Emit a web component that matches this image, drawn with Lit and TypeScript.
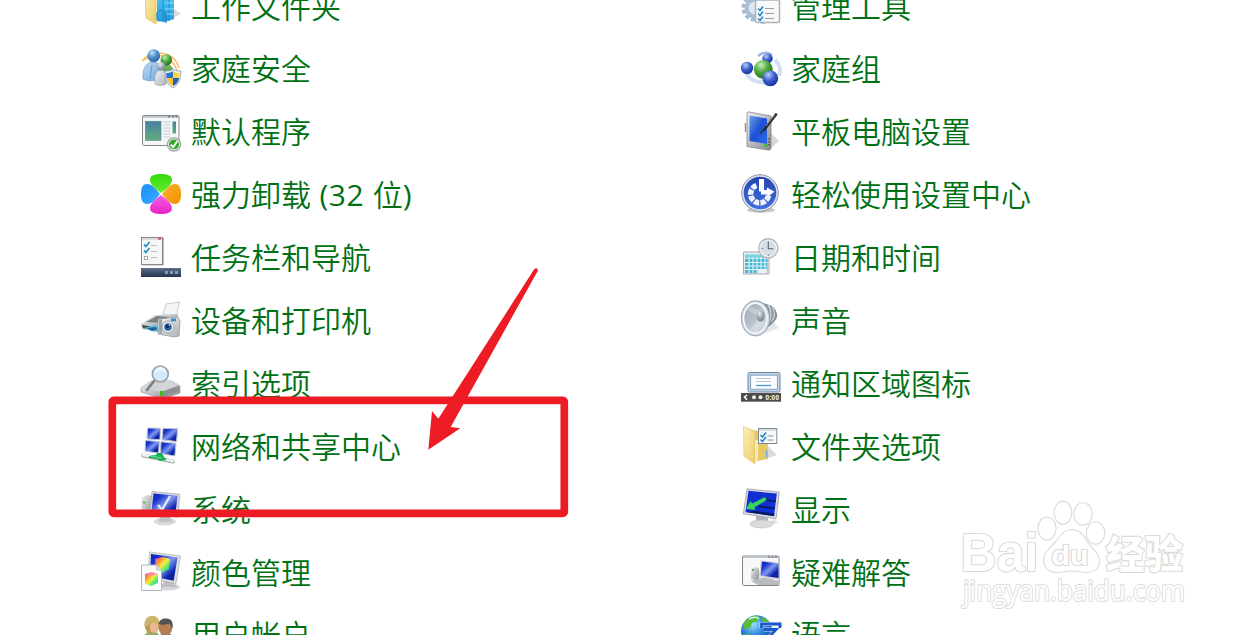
import { LitElement, html, svg, css } from "lit";
import { customElement } from "lit/decorators.js";

const workFolder = svg`
  <path d="M22 38 40 29 33 24z" fill="#000" opacity=".14"/>
  <path d="M4 4 15 8V39L5 33z" fill="url(#folder)" stroke="#d6b553" stroke-width=".6"/>
  <path d="M15 9h4v27l-4 3z" fill="#f8e9a8"/>
  <path d="M16 8h17v26l-9 3-8-1z" fill="url(#binder)"/>
  <path d="M22 8v29M28 8v28" stroke="#1287c8" stroke-width=".8"/>
  <path d="M24 18h9M24 24h9M24 29h9" stroke="#8fdcff" stroke-width="1.2"/>
  <path d="M16 35v-7l4-3 4 3v7M25 38V28" fill="none" stroke="#2e8dc0" stroke-width="1.3"/>`;

const familySafety = svg`
  <path d="M1 13C8 3 32 0 38 20M3 12C14 4 30 6 36 22" fill="none" stroke="#f9bd68" stroke-width="1.5"/>
  <path d="M17 29c-1-8 2-13 8-13s8 5 8 12z" fill="url(#green)"/>
  <circle cx="25.3" cy="12" r="5.8" fill="url(#greenBall)"/>
  <path d="M2 31C1 21 5 14 12 14s9 6 8 16c-3 3-13 4-18 1z" fill="url(#paleBlue)" stroke="#4b83ba" stroke-width=".5"/>
  <path d="M11 17 9 31" stroke="#5a91c4" stroke-width=".8"/>
  <circle cx="12.7" cy="7.7" r="6.4" fill="url(#skyBall)"/>
  <path d="M14 36c-1-9 1-14 6-14s7 5 5 14c-2 2-9 2-11 0z" fill="url(#silver)" stroke="#8b949c" stroke-width=".5"/>
  <circle cx="20.2" cy="18.3" r="4.3" fill="url(#greyBall)"/>
  <path d="M32 21c3 2 5 2 8 2-.4 9-2 13-8 17-6-4-8-8-8-17 3 0 5 0 8-2z" fill="#e9edf1" stroke="#8796a4" stroke-width=".8"/>
  <path d="M32 23v7h-6.5l-.3-5c3 0 5-.6 6.800-2z" fill="#2c73cf"/>
  <path d="M32 23c2 1.400 4 2 6.500 2l-.5 5h-6z" fill="#fad647"/>
  <path d="M25.700 30H32v8c-3-1.600-5.400-4-6.300-8z" fill="#f5c632"/>
  <path d="M32 30h6.100c-.8 4-3 6.500-6.100 8z" fill="#2463b8"/>`;

const defaultPrograms = svg`
  <rect x="1.500" y="4.500" width="36.500" height="30" rx="1" fill="#f5f7f8" stroke="#82898f"/>
  <path d="M2 6h35" stroke="#c4cad0" stroke-width="2"/>
  <path d="M27 5.800h2M31 5.800h2M34.500 5.800h2" stroke="#58626b"/>
  <rect x="4.500" y="10.300" width="15.500" height="19" fill="url(#teal)" stroke="#5e8791" stroke-width=".7"/>
  <path d="M22.500 11h7M22.500 14h7M22.500 17h7M22.500 20h7M22.500 23h7M22.500 26h7" stroke="#c5c9cc"/>
  <rect x="31.500" y="10.500" width="3.500" height="12" fill="url(#teal)"/>
  <circle cx="33" cy="33.500" r="6.500" fill="#fff" stroke="#a4aaa4" stroke-width="1.500"/>
  <circle cx="33" cy="33.500" r="5" fill="#35a52b"/>
  <path d="m29.700 33.600 2.500 2.600 4-6" fill="none" stroke="#fff" stroke-width="1.800"/>`;

const pinwheel = svg`
  <path d="M20 19C15 15 9 11 9 5.500 9 1.200 15 0 20 0s11 1.200 11 5.500C31 11 25 15 20 19z" fill="url(#petalGreen)"/>
  <path d="M20 21C15 25 9 29 9 34.500 9 38.800 15 40 20 40s11-1.200 11-5.500C31 29 25 25 20 21z" fill="url(#petalPink)"/>
  <path d="M19 20C15 15 11 10 6 10 1.200 10 0 15 0 20s1.200 10 6 10c5 0 9-5 13-10z" fill="url(#petalBlue)"/>
  <path d="M21 20C25 15 29 10 34 10c4.800 0 6 5 6 10s-1.200 10-6 10c-5 0-9-5-13-10z" fill="url(#petalOrange)"/>`;

const taskbar = svg`
  <path d="M1.500 1h21.500v27.500H1.500z" fill="#bbb"/>
  <rect x=".5" y=".5" width="21" height="27" fill="#f6f6f6" stroke="#888"/>
  <path d="M1 2h20" stroke="#d5d5d5" stroke-width="1.500"/>
  <path d="M17 1.700h3" stroke="#d25a5a" stroke-width="2"/>
  <path d="m3 7.500 2 2L8.500 5M3 13.500l2 2L8.500 11" fill="none" stroke="#2b8fc8" stroke-width="1.800"/>
  <rect x="3.500" y="19.500" width="3" height="3" fill="#fff" stroke="#aaa"/>
  <path d="M10 8.500h6M10 14.500h6M10 20.500h6" stroke="#c2c2c2"/>
  <rect y="31" width="40" height="9" fill="url(#slate)"/>
  <path d="M24 34h3v3h-3zM29 34h3v3h-3zM34 34h3v3h-3z" fill="#8c9bb0"/>`;

const devices = svg`
  <path d="m22 14 3-10 14-2c-2 5-3 9-3 16z" fill="#f4f5f6" stroke="#b4b8bc" stroke-width=".7"/>
  <path d="m0 24 14-9 22-1 2 5-19 13-18-3z" fill="url(#metal)"/>
  <path d="m5 22 11-6 11 1-8 6z" fill="#797f85"/>
  <path d="m1 25 17 3v3L2 28z" fill="#42484c"/>
  <path d="m3 28 12-3 5 2-6 5z" fill="#53c2dc"/>
  <path d="m6 28 9-1 1 2-5 2z" fill="#1c5d9f"/>
  <path d="m17 19 20-2 2 4-1 15-5 1-16-3z" fill="url(#silver)" stroke="#8c9298" stroke-width=".7"/>
  <path d="m18 19 3 .6v14.500l-3-.8z" fill="#9da3a9"/>
  <path d="M30 18.500h5v2.800h-5z" fill="#3a8ad0"/>
  <circle cx="27" cy="27" r="6" fill="#e9edf0" stroke="#8a9299" stroke-width=".8"/>
  <circle cx="27" cy="27" r="3.800" fill="#2d62a4"/>
  <circle cx="26.500" cy="26.500" r="1.700" fill="#112957"/>
  <circle cx="28.500" cy="25" r=".8" fill="#c9e6ff"/>`;

const indexing = svg`
  <path d="m0 26 11-7h20l8 5v7l-17 6L0 30z" fill="url(#metal)" stroke="#83878b" stroke-width=".5"/>
  <path d="m0 25 11-7h18l9 5-18 7z" fill="#d2d4d6"/>
  <path d="M20 30 38 24v5l-18 7z" fill="#8c9094"/>
  <path d="M19 29h3v4l-3 1z" fill="#3eb71d"/>
  <path d="m13 19-7 9" stroke="#76797d" stroke-width="2.400" stroke-linecap="round"/>
  <circle cx="19.300" cy="12" r="8" fill="#d2e8fa" fill-opacity=".95" stroke="#9ba1a8" stroke-width="1.600"/>
  <path d="M13 13c3-6 9-5 12-2-1-8-11-8-12 2z" fill="#fff" opacity=".7"/>`;

const network = svg`
  <path d="m6.500 3 13 .3-.6 11.400L6 14z" fill="url(#screen)" stroke="#c2c7d0"/>
  <path d="m22 3.300 14.700.2L35.500 16.500 21 14.800z" fill="url(#screen)" stroke="#c2c7d0"/>
  <path d="m4.500 15.500 13.800 1-.7 11.500L4 26.200z" fill="url(#screen)" stroke="#c2c7d0"/>
  <path d="M20 16.800 35 18.200 33.800 31 19.400 28.400z" fill="url(#screen)" stroke="#c2c7d0"/>
  <path d="m2 30.500 30 6" stroke="#a9b4b0" stroke-width="4" stroke-linecap="round"/>
  <path d="m2 30 30 6" stroke="#edf3ef" stroke-width="2.400" stroke-linecap="round"/>
  <path d="m8 31 7-1 1-2h5l2 4 3 3-7 1-3-2-8-1z" fill="#16ae57"/>
  <path d="m9 31 12 2" stroke="#6fe39c"/>`;

const system = svg`
  <ellipse cx="24" cy="33.500" rx="11" ry="4" fill="#d8d9db"/>
  <path d="m19 27 10 2 2 5H18z" fill="#bfc2c6"/>
  <path d="m.6 9 7-2 4 1.500V26l-6 1-5-3z" fill="url(#metal)"/>
  <path d="M2 14.500h2.500" stroke="#3cb832" stroke-width="1.600"/>
  <path d="m11 3.500 28 2.800-2.500 23L8.500 25z" fill="#d6d8db" stroke="#a3a6aa" stroke-width=".7"/>
  <path d="m12.500 5.500 24 2.300-2.200 19L10.500 23z" fill="url(#screen)"/>
  <path d="m17 17 4 5 8-14" fill="none" stroke="#e6edff" stroke-width="2.200"/>`;

const colorMgmt = svg`
  <ellipse cx="27" cy="36" rx="12" ry="3.500" fill="#d5d6d8"/>
  <path d="m24 28 8 2 4 6H20z" fill="#bcbfc3"/>
  <path d="m8.500 1 31 4-4.500 27.500L7 27z" fill="#dddfe2" stroke="#aaadb2" stroke-width=".7"/>
  <path d="m10 3 26.500 3.500-3.800 23.200L9 25z" fill="url(#screen)"/>
  <path d="m14 8 8-2 7 2-1 10-7 4-6-4z" fill="url(#rainbow)"/>
  <path d="M.5 14h15l5 5v20.500H.5z" fill="#fcfcfc" stroke="#b1b4b8"/>
  <path d="m15.500 14v5h5" fill="#ddd" stroke="#b1b4b8" stroke-width=".7"/>
  <path d="m4 23 7-2 6 2v9l-7 3-6-2.500z" fill="url(#rainbow)"/>
  <path d="m4 23 6 2 7-2-6-2z" fill="#ff7dd8" opacity=".7"/>`;

const users = svg`
  <path d="M2 30c0-9 3-13 9-13s9 5 9 13z" fill="#8fb26a"/>
  <path d="M17 30c0-8 2-11 8-11s8 4 8 11z" fill="#5482b8"/>
  <ellipse cx="11" cy="11" rx="7.500" ry="9" fill="#b89a55"/>
  <ellipse cx="13" cy="13" rx="4.300" ry="6" fill="#e8b98e"/>
  <path d="M4 14C2 4 9 1 13 2s6 4 5 8c-4 0-7-1-8-3-1 4-4 5-6 7z" fill="#cdb36b"/>
  <ellipse cx="24.500" cy="13.500" rx="6.800" ry="8" fill="#b47d54"/>
  <path d="M17.500 10c1-5 5-6 8-5.500 5 0 7 4 6 10-2-2-2-4-3-5-4 1-8 2-11 .5z" fill="#555452"/>`;

const adminTools = svg`
  <circle cx="14" cy="23" r="11.500" fill="none" stroke="#a9bccf" stroke-width="4" stroke-dasharray="4 2.020"/>
  <circle cx="14" cy="23" r="8.500" fill="#dce7f1" stroke="#a9bed3" stroke-width="4"/>
  <circle cx="22" cy="34" r="5" fill="#a8bed3"/>
  <rect x="14.500" y="15" width="24" height="22.500" rx="1.500" fill="#f8f9fa" stroke="#aeb3b8" stroke-width="1.500"/>
  <path d="m17 23.500 2 2 3-4M17 28.500l2 2 3-4M17 33.500l2 2 3-4" fill="none" stroke="#2c86c4" stroke-width="1.600"/>
  <path d="M24 23.500h9M24 28.500h9M24 33.500h9" stroke="#9aa0a6"/>`;

const homeGroup = svg`
  <path d="M5 24c3 8 12 12 22 10M34 12c5 4 6 11 4 16" fill="none" stroke="#d3dff4" stroke-width="4"/>
  <path d="M17 8c4-4 10-4 14-1" fill="none" stroke="#9fb6e6" stroke-width="2.500"/>
  <ellipse cx="26.500" cy="10.500" rx="5.200" ry="4.800" fill="url(#blueBall)"/>
  <circle cx="6" cy="20" r="6.200" fill="url(#blueBall)"/>
  <circle cx="22.300" cy="21.300" r="9.400" fill="url(#greenBall)"/>
  <circle cx="29.300" cy="30.300" r="7.900" fill="url(#blueBall)"/>`;

const tablet = svg`
  <path d="m28 39 10-9-9-9z" fill="#000" opacity=".15"/>
  <path d="M6 2 7 .8 30 5v33l-2 1.200L6 35.500z" fill="url(#metal)" stroke="#747b85" stroke-width=".7"/>
  <path d="M4.500 12v9" stroke="#8f959c" stroke-width="1.500"/>
  <path d="m8.500 4.500 17.500 3V33L8.500 30z" fill="url(#tabletBlue)"/>
  <path d="m23 33 4 .6v2.600l-4-.8z" fill="#45b83b"/>
  <path d="M28 27v9" stroke="#333" stroke-dasharray="1.500 1.500"/>
  <path d="M35 3.500 23 19" stroke="#25272a" stroke-width="2.600" stroke-linecap="round"/>
  <path d="m24 17-5 5.500" stroke="#333" stroke-width="1.400"/>
  <path d="m34 4-9 11" stroke="#8d949c" stroke-width=".8"/>`;

const easeOfAccess = svg`
  <ellipse cx="20" cy="36" rx="14" ry="3" fill="#ccc"/>
  <circle cx="19" cy="19" r="18.300" fill="#dfe3ec" stroke="#8e95a4"/>
  <circle cx="19" cy="19" r="16.300" fill="url(#accessBlue)"/>
  <path d="M27.5 21.500A9 9 0 1 1 15.500 11.500" fill="none" stroke="#f0f3fb" stroke-width="5.500" stroke-dasharray="5.200 1.200"/>
  <path d="M18 5h5v12.500H18z" fill="#fff"/>
  <path d="M20 16h6v-2.500l7.500 4.300-6.500 4.700-1-2h-6z" fill="#fff"/>`;

const dateTime = svg`
  <path d="M2.500 15h25.500v22H2.500z" fill="#e7ebed" stroke="#a6abb0"/>
  <path d="M4 17.500h22.500v4H4z" fill="#78d1df"/>
  <path d="M4 22h22.500v14H4z" fill="#46b5cf"/>
  <path d="M4 25.500h22M4 29h22M4 32.500h22M8 20v16M12 20v16M16 20v16M20 20v16M24 20v16" stroke="#e2f5f8" stroke-width="1.100"/>
  <path d="M17 33h9v3h-9z" fill="#e8f3f5"/>
  <circle cx="27.300" cy="11.300" r="9.700" fill="#e9edf0" stroke="#a9b0b5" stroke-width="1.200"/>
  <circle cx="27.300" cy="11.300" r="7.500" fill="#d7dee4"/>
  <path d="M27.300 4.500v7.300h5" fill="none" stroke="#516477" stroke-width="1.100"/>
  <path d="M20.500 11.500h2M27.300 17v2" stroke="#7d8e9d"/>`;

const sound = svg`
  <path d="m16 36 22-8-7-8z" fill="#000" opacity=".1"/>
  <path d="M17 1 31 6c4 3 5.500 7 5 11-1 5-9 10-16 15z" fill="#858d95"/>
  <path d="M27 5c4 5 4 13 0 19M31 7c3 4 3 9 0 14" fill="none" stroke="#c8d0d8" stroke-width="1.500"/>
  <ellipse cx="14.500" cy="18.300" rx="14.200" ry="17.700" fill="#cfdae6" stroke="#8a95a1" stroke-width=".8"/>
  <ellipse cx="14.300" cy="18.300" rx="11.700" ry="15" fill="url(#cone)" stroke="#f7f9fb" stroke-width="1.500"/>
  <path d="m19 17-11 13 7 3 8-10zM19 16 5 10l3-5 10 6z" fill="#fff" opacity=".25"/>
  <ellipse cx="19.500" cy="16" rx="4" ry="5.500" fill="url(#greyBall)"/>`;

const notification = svg`
  <rect x="7" y="10.500" width="32" height="19.500" rx="1.500" fill="#bcd2e8" stroke="#75889c"/>
  <rect x="9.700" y="13.200" width="26.600" height="14" fill="#fafcfd" stroke="#7996b3" stroke-width=".8"/>
  <path d="M15 16.500h15M15 19.500h15" stroke="#c1c5c8"/>
  <path d="M15 23.500h15" stroke="#4a9ad4" stroke-width="1.300"/>
  <rect y="31" width="40" height="8.700" fill="#4d4d4d"/>
  <path d="m6 33-2.500 2.300L6 37.700" fill="none" stroke="#fff" stroke-width="1.500"/>
  <circle cx="13" cy="35.300" r="2" fill="#eee"/><circle cx="19.500" cy="35.300" r="2" fill="#eee"/>
  <text x="24.500" y="37.700" font-size="6.500" font-weight="700" textLength="13.500" fill="#fff" font-family="Liberation Sans, sans-serif">0:00</text>`;

const folderOptions = svg`
  <path d="m16 37 20-7-9-9z" fill="#000" opacity=".14"/>
  <path d="m10 5 14 2v12h3v15l-14 2z" fill="#e7c967"/>
  <path d="M2.500 1.500 14 6v33L3 31z" fill="url(#folder)" stroke="#dcbf66" stroke-width=".6"/>
  <path d="M14 15h3v19l-3 3z" fill="#f8e9ad"/>
  <path d="M24.800 25.500h1.600v7h-1.600z" fill="#6fb6dc"/>
  <rect x="17.500" y="3.500" width="18.300" height="15" fill="#f6f8f9" stroke="#7e8a94"/>
  <path d="M18 5h17" stroke="#b7c1c9"/>
  <path d="m19.500 10 2 2 3.500-4.500M19.500 14.500l2 2 3.500-4.500" fill="none" stroke="#2389c7" stroke-width="1.600"/>
  <path d="M26.500 11h6M26.500 15h6" stroke="#8e949b"/>`;

const display = svg`
  <path d="m20 38 17-3-4-4z" fill="#000" opacity=".12"/>
  <path d="m15 27 12 3v6H15z" fill="#b1b5ba"/>
  <ellipse cx="20.500" cy="36" rx="11.500" ry="4" fill="#d9dbdd" stroke="#b3b6ba" stroke-width=".5"/>
  <path d="M6 .8 38.300 4 35 30.800 2.300 25.800z" fill="#d9dbde" stroke="#94989d" stroke-width=".7"/>
  <path d="M7.500 2.800 35.800 5.600 33 28.300 4.500 24z" fill="#1230d2"/>
  <path d="M20 11 35 12.500 34.700 14 19 12.700zM18 17.500l16 2-.2 1.600L17 19.200zM14 23 33.500 25.700 33 28 5 24z" fill="#071858"/>
  <path d="m24 9 1.500 3.200-12 7 .5 2.700-9-1.200 4.500-7.700 1.700 2.600z" fill="#35d65a"/>`;

const troubleshoot = svg`
  <rect x="1.500" y="5" width="36.500" height="29.500" rx="1" fill="#f7f8f9" stroke="#81888f"/>
  <path d="M2 6.300h35.500" stroke="#bdc4ca" stroke-width="1.600"/>
  <path d="M27 6h2M30.500 6h2M34 6h2" stroke="#59636c"/>
  <path d="m10 17 5-1 3 2v12l-8-2z" fill="url(#metal)"/>
  <path d="M11 19h2" stroke="#30a930" stroke-width="1.500"/>
  <path d="m10 30 14-4 13 4v4H17z" fill="#b8bbbf"/>
  <path d="m19.500 9 18 2v18L18 26z" fill="#d8dade"/>
  <path d="m21 10.500 16.500 2V27L19.500 24.500z" fill="url(#screen)"/>`;

const language = svg`
  <circle cx="15.700" cy="17" r="15.700" fill="url(#globe)"/>
  <path d="M3 9C7 2 14 1 18 2l-2 5-5 2-2 5-6 1zM1 22l6-3 4 6-2 6zM20 3c5 1 9 4 10 8l-7-1z" fill="#58bd34"/>
  <path d="M8 5c4-2 8-2 10 0" stroke="#d9f3ff" stroke-width="1.500" fill="none"/>
  <path d="M20.500 14v-4h18.500v4M23 15.500h12L28 23" fill="none" stroke="#dbe9fa" stroke-width="4"/>
  <path d="M20.500 14v-4h18.500v4M23 15.500h12L28 23" fill="none" stroke="#1a58cc" stroke-width="2.800"/>`;

const columns = [
  [
    [workFolder, "工作文件夹"],
    [familySafety, "家庭安全"],
    [defaultPrograms, "默认程序"],
    [pinwheel, html`强力卸载<span class="latin"> (32 </span>位<span class="latin">)</span>`],
    [taskbar, "任务栏和导航"],
    [devices, "设备和打印机"],
    [indexing, "索引选项"],
    [network, "网络和共享中心"],
    [system, "系统"],
    [colorMgmt, "颜色管理"],
    [users, "用户帐户"],
  ],
  [
    [adminTools, "管理工具"],
    [homeGroup, "家庭组"],
    [tablet, "平板电脑设置"],
    [easeOfAccess, "轻松使用设置中心"],
    [dateTime, "日期和时间"],
    [sound, "声音"],
    [notification, "通知区域图标"],
    [folderOptions, "文件夹选项"],
    [display, "显示"],
    [troubleshoot, "疑难解答"],
    [language, "语言"],
  ],
];

const linear = (id: string, stops: string[], diagonal = false) => svg`
  <linearGradient id=${id} x1="0" y1="0" x2=${diagonal ? 1 : 0} y2="1">
    ${stops.map((c, i) => svg`<stop offset=${i / (stops.length - 1)} stop-color=${c}></stop>`)}
  </linearGradient>`;

const ball = (id: string, stops: string[]) => svg`
  <radialGradient id=${id} cx=".38" cy=".28" r=".75">
    ${stops.map((c, i) => svg`<stop offset=${i / (stops.length - 1)} stop-color=${c}></stop>`)}
  </radialGradient>`;

@customElement("app-root")
export class AppRoot extends LitElement {
  static styles = css`
    :host {
      display: block;
      position: relative;
      height: 635px;
      overflow: hidden;
      background: #fff;
    }
    .panel {
      display: grid;
      grid-template-columns: 600px 1fr;
      padding-left: 141px;
      margin-top: -26.400px;
    }
    .item {
      display: flex;
      align-items: center;
      gap: 10px;
      height: 62.900px;
    }
    .icon {
      width: 40px;
      height: 40px;
      flex: none;
      overflow: visible;
    }
    .label {
      padding-top: 3px;
      font: 30px/40px "Open Sans", "Noto Sans CJK SC", sans-serif;
      font-weight: 350;
      color: #007014;
      white-space: pre;
    }
    .latin {
      font-weight: 400;
      letter-spacing: 0.600px;
    }
    .defs {
      position: absolute;
      width: 0;
      height: 0;
    }
    .overlay {
      position: absolute;
      left: 0;
      top: 0;
    }
    .mark {
      fill: #fff;
      stroke: #dadada;
      stroke-width: 2.200px;
      paint-order: stroke;
      stroke-linejoin: round;
    }
    .logo {
      font-family: "Liberation Sans", sans-serif;
      font-weight: 700;
    }
    .cjk {
      font-family: "Noto Sans CJK SC", sans-serif;
      font-weight: 900;
    }
    .url {
      font-family: "Open Sans", sans-serif;
      font-weight: 500;
      stroke: #dedede;
    }
  `;

  render() {
    return html`
      <svg class="defs">
        <defs>
          ${linear("folder", ["#fdf0b8", "#eccb68"], true)}
          ${linear("binder", ["#58c8f5", "#1e9be0"])}
          ${linear("green", ["#7cc45f", "#3b8a34"])}
          ${linear("paleBlue", ["#c3def5", "#6ba3d6"], true)}
          ${linear("silver", ["#f4f6f7", "#a9b0b6"], true)}
          ${linear("metal", ["#f1f2f3", "#85898e"], true)}
          ${linear("teal", ["#4a7ea6", "#5fae77"])}
          ${linear("petalGreen", ["#34d90c", "#66ee33"])}
          ${linear("petalPink", ["#f45fe4", "#e822c8"])}
          ${linear("petalBlue", ["#1590fa", "#3fa9ff"], true)}
          ${linear("petalOrange", ["#fcb12f", "#f39000"], true)}
          ${linear("slate", ["#5d6f8c", "#26344e"])}
          ${linear("screen", ["#0a22b8", "#1a35d0", "#7f98ee", "#0d25ae", "#0a1d90"], true)}
          ${linear("rainbow", ["#ff3ad6", "#ff8a3a", "#f6f03a", "#3ae87a", "#2fc8f5"], true)}
          ${linear("tabletBlue", ["#6ba0ea", "#1c4fd4", "#2b6df0"], true)}
          ${linear("accessBlue", ["#2445b0", "#3f6fe0"])}
          ${linear("cone", ["#9ba7b4", "#d6dde4"], true)}
          ${ball("greenBall", ["#c6efb5", "#4da63d", "#1f6f1c"])}
          ${ball("skyBall", ["#c8e5fb", "#4f8fcb", "#2a659f"])}
          ${ball("greyBall", ["#eef0f2", "#a5acb3", "#757d85"])}
          ${ball("blueBall", ["#b9cdfa", "#3c62cf", "#142f94"])}
          ${ball("globe", ["#9be0fa", "#2b83d8", "#0d3d9c"])}
        </defs>
      </svg>
      <div class="panel">
        ${columns.map(
          (col) => html`<div>
            ${col.map(
              ([icon, name]) => html`<div class="item">
                <svg class="icon" viewBox="0 0 40 40">${icon}</svg>
                <span class="label" lang="zh-CN">${name}</span>
              </div>`
            )}
          </div>`
        )}
      </div>
      <svg class="overlay" width="1254" height="635" viewBox="0 0 1254 635">
        <rect x="112.300" y="400.300" width="452" height="113" rx="1.500" fill="none" stroke="#ed1c24" stroke-width="7.700"/>
        <path d="M428.300 449.700 432 411 438.300 418.700 534 269.500Q537 266.500 538 270.500L450.700 427 460.300 428.300z" fill="#ed1c24"/>
        <g class="mark">
          <text class="logo" x="960.500" y="571" font-size="54" textLength="78" lengthAdjust="spacingAndGlyphs">Bai</text>
          <ellipse cx="1047" cy="528.500" rx="8.500" ry="11"/>
          <ellipse cx="1063" cy="512.700" rx="8.300" ry="11"/>
          <ellipse cx="1083" cy="514" rx="8.700" ry="10.700"/>
          <ellipse cx="1095.500" cy="533" rx="8.700" ry="10.700"/>
          <path d="M1071 530c8 0 12 5 16 12s12 11 12 19-6 11-12 11c-6 0-10-1.500-16-1.500s-8 1.500-14 1.500c-8 0-13-5-13-12 0-8 7-12 12-18s8-12 15-12z"/>
          <text class="logo" x="1051.500" y="565" font-size="27" textLength="37" lengthAdjust="spacingAndGlyphs">du</text>
          <text class="cjk" x="1106" y="568" font-size="38.500" textLength="77" lengthAdjust="spacingAndGlyphs">经验</text>
          <text class="url" x="963" y="600.500" font-size="29" textLength="222" lengthAdjust="spacingAndGlyphs">jingyan.baidu.com</text>
        </g>
      </svg>
    `;
  }
}
